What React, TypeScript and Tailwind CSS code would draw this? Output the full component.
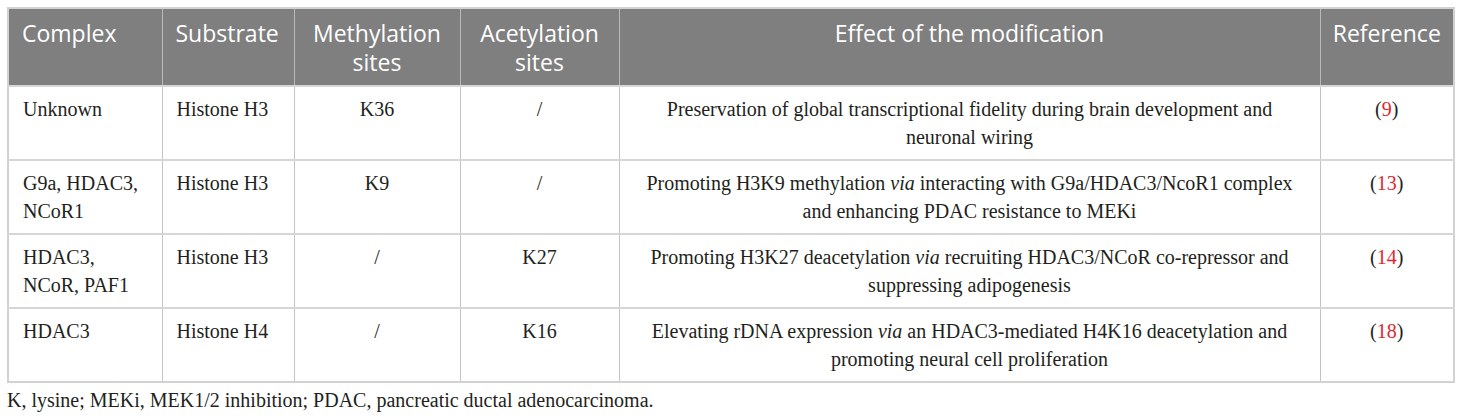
import React from 'react';

type Row = {
    complex: string[];
    substrate: string;
    methyl: string;
    acetyl: string;
    effect: React.ReactNode;
    ref: string;
};

const rows: Row[] = [
    {
        complex: ['Unknown'],
        substrate: 'Histone H3',
        methyl: 'K36',
        acetyl: '/',
        effect: (
            <>
                Preservation of global transcriptional fidelity during brain development and
                <br />
                neuronal wiring
            </>
        ),
        ref: '9',
    },
    {
        complex: ['G9a, HDAC3,', 'NCoR1'],
        substrate: 'Histone H3',
        methyl: 'K9',
        acetyl: '/',
        effect: (
            <>
                Promoting H3K9 methylation <i>via</i> interacting with G9a/HDAC3/NcoR1 complex
                <br />
                and enhancing PDAC resistance to MEKi
            </>
        ),
        ref: '13',
    },
    {
        complex: ['HDAC3,', 'NCoR, PAF1'],
        substrate: 'Histone H3',
        methyl: '/',
        acetyl: 'K27',
        effect: (
            <>
                Promoting H3K27 deacetylation <i>via</i> recruiting HDAC3/NCoR co-repressor and
                <br />
                suppressing adipogenesis
            </>
        ),
        ref: '14',
    },
    {
        complex: ['HDAC3'],
        substrate: 'Histone H4',
        methyl: '/',
        acetyl: 'K16',
        effect: (
            <>
                Elevating rDNA expression <i>via</i> an HDAC3-mediated H4K16 deacetylation and
                <br />
                promoting neural cell proliferation
            </>
        ),
        ref: '18',
    },
];

const th = "align-top pt-[10px] pb-[8px] font-normal border-x border-[#b9b9b9]";
const td = "align-top pt-[8px] pb-[8px] border-x border-[#c4c4c4] border-t-2 border-t-[#d6d6d6]";

export default function App() {
    return (
        <div className="w-[1460px] h-[418px] bg-white pt-[7px] pl-[7px]">
            <table className="table-fixed border-collapse w-[1446px] border-2 border-[#d2d2d2]">
                <colgroup>
                    <col className="w-[154px]" />
                    <col className="w-[132px]" />
                    <col className="w-[166px]" />
                    <col className="w-[159px]" />
                    <col className="w-[701px]" />
                    <col className="w-[134px]" />
                </colgroup>
                {/* Header */}
                <thead className="bg-[#7f7f7f] text-white text-[23px] leading-[29px] font-['Open_Sans',sans-serif]">
                    <tr>
                        <th className={`${th} text-left pl-[13px]`}>Complex</th>
                        <th className={`${th} text-left pl-[13px]`}>Substrate</th>
                        <th className={`${th} text-center`}>Methylation<br />sites</th>
                        <th className={`${th} text-center`}>Acetylation<br />sites</th>
                        <th className={`${th} text-center`}>Effect of the modification</th>
                        <th className={`${th} text-center`}>Reference</th>
                    </tr>
                </thead>
                <tbody className="text-[#231f20] text-[20px] leading-[28px] font-['Liberation_Serif',serif]">
                    {rows.map((row, i) => (
                        <tr key={i}>
                            <td className={`${td} text-left pl-[14px]`}>
                                {row.complex.map((line, j) => (
                                    <div key={j}>{line}</div>
                                ))}
                            </td>
                            <td className={`${td} text-left pl-[14px]`}>{row.substrate}</td>
                            <td className={`${td} text-center`}>{row.methyl}</td>
                            <td className={`${td} text-center`}>{row.acetyl}</td>
                            <td className={`${td} text-center`}>{row.effect}</td>
                            <td className={`${td} text-center`}>
                                (<span className="text-[#e3262d]">{row.ref}</span>)
                            </td>
                        </tr>
                    ))}
                </tbody>
            </table>
            <p className="mt-[5px] text-[20px] leading-[24px] text-[#231f20] font-['Liberation_Serif',serif]">
                K, lysine; MEKi, MEK1/2 inhibition; PDAC, pancreatic ductal adenocarcinoma.
            </p>
        </div>
    );
}
